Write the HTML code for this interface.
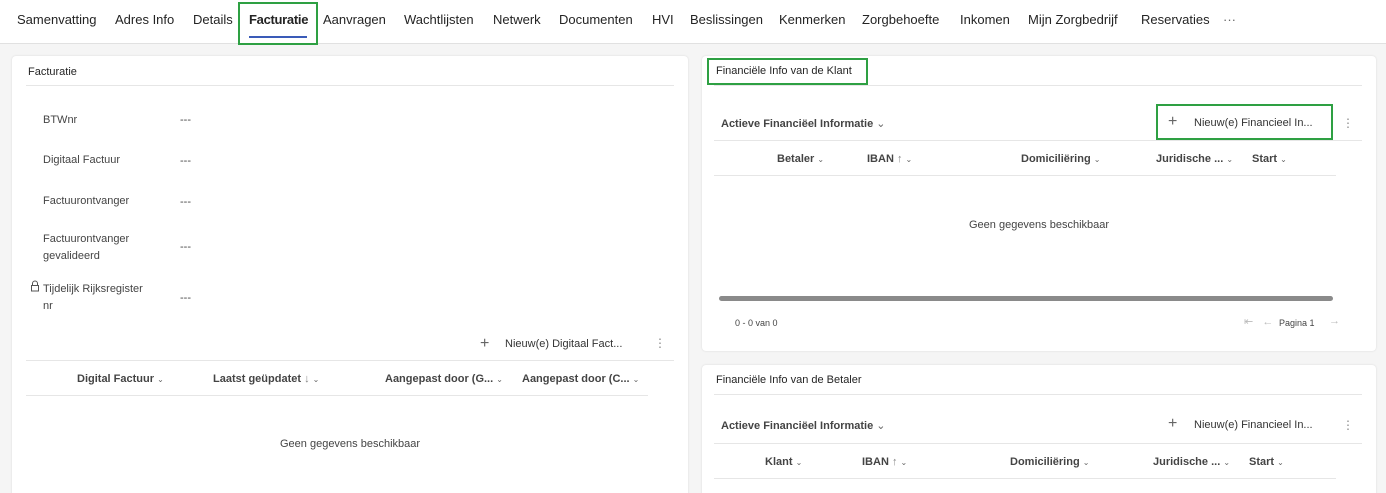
<!DOCTYPE html>
<html><head><meta charset="utf-8"><style>
*{margin:0;padding:0;box-sizing:border-box}
html,body{width:1386px;height:493px;overflow:hidden}
body{background:#f5f5f5;font-family:"Liberation Sans",sans-serif;color:#242424;position:relative}
.a{position:absolute;white-space:nowrap}
.tabs{position:absolute;left:0;top:0;width:1386px;height:44px;background:#fff;border-bottom:1px solid #e1e1e1}
.t{position:absolute;top:12px;font-size:13px;color:#242424}
.card{position:absolute;background:#fff;border-radius:4px;box-shadow:0 0 2px rgba(0,0,0,.12)}
.f{font-size:11px;color:#444}
.h{font-size:11px;font-weight:bold;color:#444}
.line{position:absolute;height:1px;background:#e6e6e6}
.g{border:2px solid #2ea043;position:absolute}
.ch{font-size:8px;color:#666;font-weight:normal}
</style></head><body>
<div class="tabs">
<span class="t" style="left:17px">Samenvatting</span>
<span class="t" style="left:115px">Adres Info</span>
<span class="t" style="left:193px">Details</span>
<span class="t" style="left:249px;font-weight:bold;letter-spacing:-.3px">Facturatie</span>
<span class="t" style="left:323px">Aanvragen</span>
<span class="t" style="left:404px">Wachtlijsten</span>
<span class="t" style="left:493px">Netwerk</span>
<span class="t" style="left:559px">Documenten</span>
<span class="t" style="left:652px">HVI</span>
<span class="t" style="left:690px">Beslissingen</span>
<span class="t" style="left:779px">Kenmerken</span>
<span class="t" style="left:862px">Zorgbehoefte</span>
<span class="t" style="left:960px">Inkomen</span>
<span class="t" style="left:1028px">Mijn Zorgbedrijf</span>
<span class="t" style="left:1141px">Reservaties</span>
<span class="t" style="left:1223px;color:#666">···</span>
<div class="a" style="left:249px;top:36px;width:58px;height:2px;background:#3a5bb8"></div>
</div>
<div class="g" style="left:238px;top:2px;width:80px;height:43px"></div>

<div class="card" style="left:12px;top:56px;width:676px;height:460px">
<div class="a h" style="left:16px;top:10px;font-weight:normal;color:#242424">Facturatie</div>
<div class="line" style="left:14px;top:29px;width:648px"></div>
<div class="a f" style="left:31px;top:58px">BTWnr</div><div class="a f" style="left:168px;top:58px">---</div>
<div class="a f" style="left:31px;top:98px">Digitaal Factuur</div><div class="a f" style="left:168px;top:99px">---</div>
<div class="a f" style="left:31px;top:139px">Factuurontvanger</div><div class="a f" style="left:168px;top:140px">---</div>
<div class="a f" style="left:31px;top:175px;line-height:17px">Factuurontvanger<br>gevalideerd</div><div class="a f" style="left:168px;top:185px">---</div>
<svg class="a" style="left:18px;top:224px" width="10" height="12" viewBox="0 0 10 12"><path d="M2.5 5.5V3.5a2.5 2.5 0 0 1 5 0v2M1.5 5.5h7v5.5h-7z" fill="none" stroke="#555" stroke-width="1"/></svg>
<div class="a f" style="left:31px;top:225px;line-height:17px">Tijdelijk Rijksregister<br>nr</div><div class="a f" style="left:168px;top:236px">---</div>
<div class="a" style="left:468px;top:279px;font-size:16px;color:#666">+</div>
<div class="a f" style="left:493px;top:282px;color:#333">Nieuw(e) Digitaal Fact...</div>
<div class="a" style="left:642px;top:280px;font-size:12px;color:#888">⋮</div>
<div class="line" style="left:14px;top:304px;width:648px"></div>
<div class="a h" style="left:65px;top:317px">Digital Factuur <span class="ch">⌄</span></div>
<div class="a h" style="left:201px;top:317px">Laatst geüpdatet <span style="color:#888;font-weight:normal">↓</span> <span class="ch">⌄</span></div>
<div class="a h" style="left:373px;top:317px">Aangepast door (G... <span class="ch">⌄</span></div>
<div class="a h" style="left:510px;top:317px">Aangepast door (C... <span class="ch">⌄</span></div>
<div class="line" style="left:14px;top:339px;width:622px"></div>
<div class="a f" style="left:268px;top:382px">Geen gegevens beschikbaar</div>
</div>

<div class="card" style="left:702px;top:56px;width:674px;height:295px">
<div class="a h" style="left:14px;top:9px;font-weight:normal;color:#242424">Financiële Info van de Klant</div>
<div class="line" style="left:12px;top:29px;width:648px"></div>
<div class="a h" style="left:19px;top:61px">Actieve Financiëel Informatie <span style="font-weight:normal;color:#666">⌄</span></div>
<div class="a" style="left:466px;top:57px;font-size:16px;color:#666">+</div>
<div class="a f" style="left:492px;top:61px;color:#333">Nieuw(e) Financieel In...</div>
<div class="a" style="left:640px;top:60px;font-size:12px;color:#888">⋮</div>
<div class="line" style="left:12px;top:84px;width:648px"></div>
<div class="a h" style="left:75px;top:97px">Betaler <span class="ch">⌄</span></div>
<div class="a h" style="left:165px;top:97px">IBAN <span style="font-weight:normal;color:#888">↑</span> <span class="ch">⌄</span></div>
<div class="a h" style="left:319px;top:97px">Domiciliëring <span class="ch">⌄</span></div>
<div class="a h" style="left:454px;top:97px">Juridische ... <span class="ch">⌄</span></div>
<div class="a h" style="left:550px;top:97px">Start <span class="ch">⌄</span></div>
<div class="line" style="left:12px;top:119px;width:622px"></div>
<div class="a f" style="left:267px;top:163px">Geen gegevens beschikbaar</div>
<div class="a" style="left:17px;top:240px;width:614px;height:5px;border-radius:3px;background:#8a8a8a"></div>
<div class="a" style="left:33px;top:262px;font-size:9px;color:#444">0 - 0 van 0</div>
<div class="a" style="left:542px;top:259px;font-size:11px;color:#bbb">⇤ &nbsp;&nbsp;←</div>
<div class="a" style="left:577px;top:262px;font-size:9px;color:#444">Pagina 1</div>
<div class="a" style="left:627px;top:259px;font-size:11px;color:#bbb">→</div>
</div>
<div class="g" style="left:707px;top:58px;width:161px;height:27px"></div>
<div class="g" style="left:1156px;top:104px;width:177px;height:36px"></div>

<div class="card" style="left:702px;top:365px;width:674px;height:150px">
<div class="a h" style="left:14px;top:9px;font-weight:normal;color:#242424">Financiële Info van de Betaler</div>
<div class="line" style="left:12px;top:29px;width:648px"></div>
<div class="a h" style="left:19px;top:54px">Actieve Financiëel Informatie <span style="font-weight:normal;color:#666">⌄</span></div>
<div class="a" style="left:466px;top:50px;font-size:16px;color:#666">+</div>
<div class="a f" style="left:492px;top:54px;color:#333">Nieuw(e) Financieel In...</div>
<div class="a" style="left:640px;top:53px;font-size:12px;color:#888">⋮</div>
<div class="line" style="left:12px;top:78px;width:648px"></div>
<div class="a h" style="left:63px;top:91px">Klant <span class="ch">⌄</span></div>
<div class="a h" style="left:160px;top:91px">IBAN <span style="font-weight:normal;color:#888">↑</span> <span class="ch">⌄</span></div>
<div class="a h" style="left:308px;top:91px">Domiciliëring <span class="ch">⌄</span></div>
<div class="a h" style="left:451px;top:91px">Juridische ... <span class="ch">⌄</span></div>
<div class="a h" style="left:547px;top:91px">Start <span class="ch">⌄</span></div>
<div class="line" style="left:12px;top:113px;width:622px"></div>
</div>
</body></html>
